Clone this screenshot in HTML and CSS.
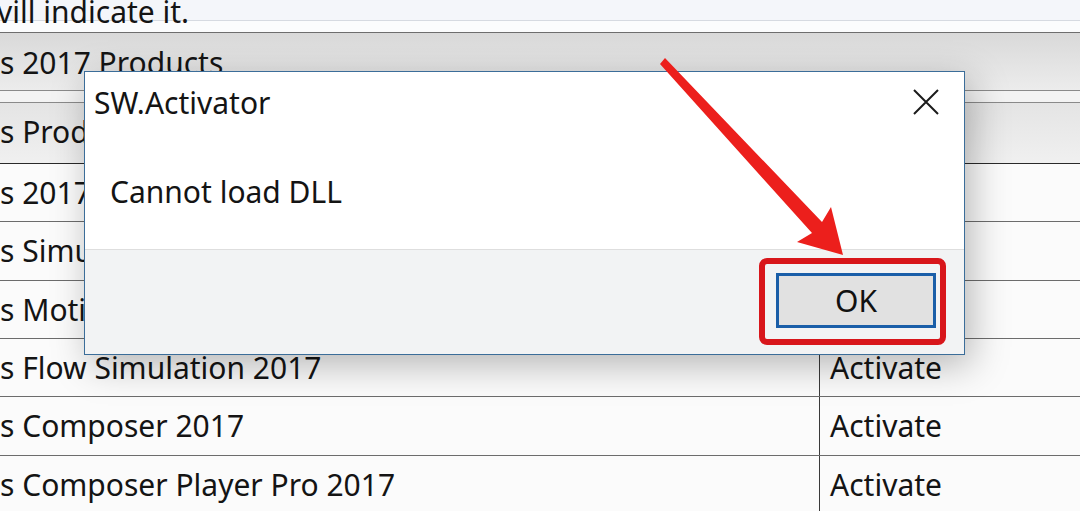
FILE: index.html
```html
<!DOCTYPE html>
<html lang="en">
<head>
    <meta charset="UTF-8">
    <title>SW.Activator</title>
    <link rel="stylesheet" href="styles.css">
</head>
<body>
    <div class="screen">
        <div class="note"><span>vill indicate it.</span></div>
        <div class="note-gap"></div>
        <div class="group-head">s 2017 Products</div>
        <div class="group-sub"></div>

        <div class="row row-first"><div class="name">s Products</div><div class="state"></div></div>
        <div class="row"><div class="name">s 2017</div><div class="state"></div></div>
        <div class="row"><div class="name">s Simulation 2017</div><div class="state"></div></div>
        <div class="row"><div class="name">s Motion 2017</div><div class="state"></div></div>
        <div class="row"><div class="name">s Flow Simulation 2017</div><div class="state">Activate</div></div>
        <div class="row"><div class="name">s Composer 2017</div><div class="state">Activate</div></div>
        <div class="row"><div class="name">s Composer Player Pro 2017</div><div class="state">Activate</div></div>

        <!-- message box on top of the list -->
        <div class="dialog">
            <div class="dialog-title">
                <span>SW.Activator</span>
                <svg class="close" width="26" height="26" viewBox="0 0 26 26">
                    <path d="M1 1 L25 25 M25 1 L1 25" stroke="#1b1b1b" stroke-width="2" fill="none"/>
                </svg>
            </div>
            <div class="dialog-body">Cannot load DLL</div>
            <div class="dialog-foot">
                <div class="highlight">
                    <button class="ok-btn">OK</button>
                </div>
            </div>
        </div>

        <svg class="arrow" width="1080" height="511" viewBox="0 0 1080 511">
            <polygon points="660,64 665,58 822,222 831,207 843,255 797,242 812,233" fill="#ec1f1c"/>
        </svg>
    </div>
</body>
</html>
```

FILE: styles.css
```css
body {
    margin: 0;
    background: #ffffff;
    font-family: "Noto Sans", "Open Sans", sans-serif;
    color: #141414;
}
.screen {
    position: relative;
    width: 1080px;
    height: 511px;
    overflow: hidden;
}
.note {
    height: 20px;
    background: #f4f6fa;
    border-bottom: 1px solid #d6dae1;
    font-size: 30px;
    line-height: 20px;
}
.note span {
    position: relative;
    top: 2px;
    margin-left: -3px;
}
.note-gap {
    height: 11px;
    background: #fbfcfd;
    border-bottom: 1px solid #6e6e6e;
}
.group-head {
    height: 57px;
    background: linear-gradient(#d9d9d9, #ececec);
    border-bottom: 1px solid #8a8a8a;
    font-size: 30px;
    line-height: 60px;
}
.group-sub {
    height: 11px;
    background: #f3f3f3;
    border-bottom: 1px solid #8a8a8a;
}
.row {
    display: flex;
    height: 57.33px;
    border-bottom: 1px solid #6c6c6c;
    background: #fbfbfb;
    font-size: 30px;
}
.row-first {
    height: 60px;
    background: linear-gradient(#e4e4e4, #f0f0f0);
    border-bottom-color: #2a2a2a;
}
.name {
    width: 819px;
    border-right: 1px solid #3a3a3a;
    line-height: 58px;
}
.state {
    padding-left: 10px;
    line-height: 58px;
}

.dialog {
    position: absolute;
    left: 84px;
    top: 71px;
    width: 879px;
    height: 282px;
    border: 1px solid #3b6d99;
    background: #ffffff;
    box-shadow: 6px 10px 36px rgba(0, 0, 0, 0.28);
    display: flex;
    flex-direction: column;
}
.dialog-title {
    height: 60px;
    display: flex;
    align-items: center;
    justify-content: space-between;
    padding: 0 25px 0 9px;
    font-size: 30px;
}
.dialog-body {
    height: 117px;
    padding-left: 25px;
    font-size: 30px;
    line-height: 120px;
}
.dialog-foot {
    flex: 1;
    background: #f2f3f4;
    border-top: 1px solid #dedede;
    display: flex;
    justify-content: flex-end;
    align-items: center;
    padding-right: 18px;
}
.highlight {
    border: 6px solid #d8161b;
    border-radius: 8px;
    padding: 9px 4px 11px 11px;
    margin-top: -2px;
}
.ok-btn {
    width: 160px;
    height: 55px;
    background: #e1e1e1;
    border: 3px solid #1a5ea8;
    font-family: "Noto Sans", "Open Sans", sans-serif;
    font-size: 30px;
    color: #111111;
    padding: 0;
}
.arrow {
    position: absolute;
    left: 0;
    top: 0;
}
```
